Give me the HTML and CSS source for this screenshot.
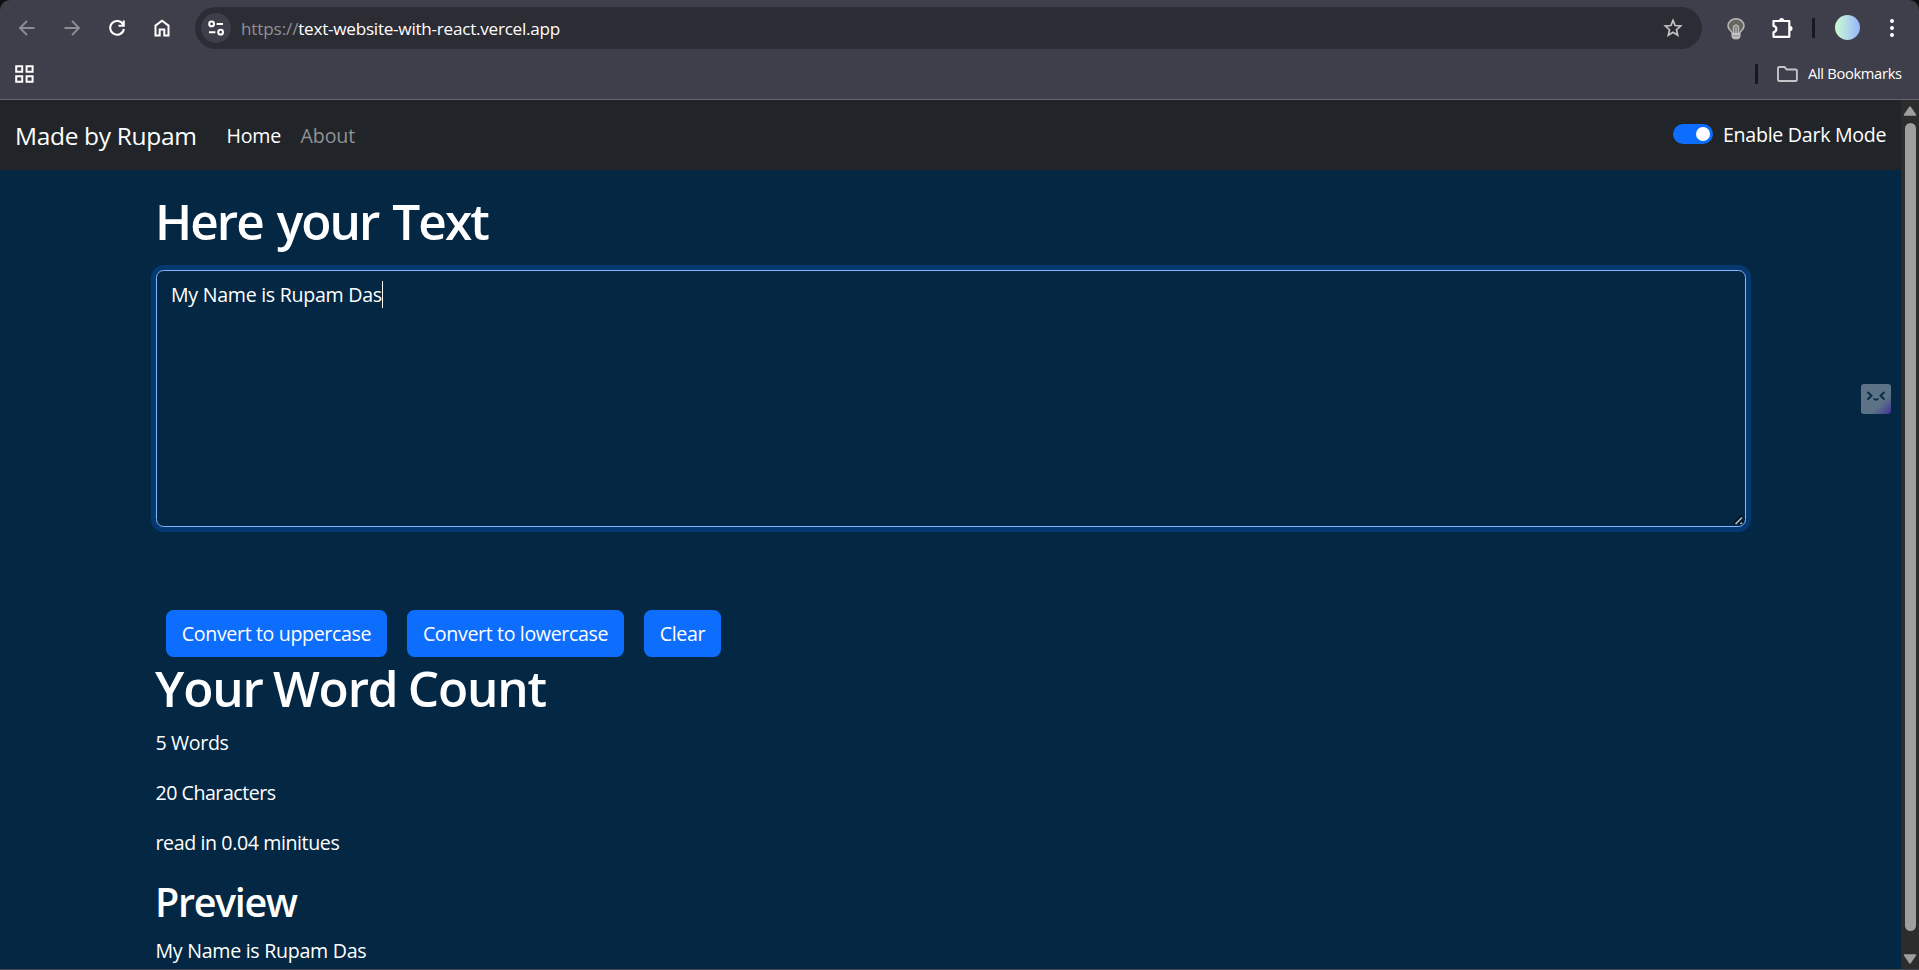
FILE: index.html
```html
<!DOCTYPE html>
<html lang="en">
<head>
<meta charset="utf-8">
<title>Text Utils</title>
<link rel="stylesheet" href="styles.css">
</head>
<body>
<div class="browser">
  <header class="chrome">
    <div class="toolbar">
      <div class="nav-icons">
        <svg class="icon dim" viewBox="0 0 18 18"><path d="M16.500 9H2.500M9 2L2 9l7 7"/></svg>
        <svg class="icon dim" viewBox="0 0 18 18"><path d="M1.500 9h14M9 2l7 7-7 7"/></svg>
        <svg class="icon" viewBox="0 0 18 18"><path d="M15.200 5.600A6.900 6.900 0 1 0 15.900 10M15.800 1.500v5.300h-5.300"/></svg>
        <svg class="icon" viewBox="0 0 18 18"><path d="M2.500 16.600V6.600L9 1.700l6.500 4.900v10H11.300v-6H6.700v6z"/></svg>
      </div>
      <div class="omnibox">
        <span class="site-info"><svg class="tune" viewBox="0 0 18 18"><circle cx="4.600" cy="4.900" r="2.400"/><path d="M9.600 4.900H16M2 13.200h6.400"/><circle cx="13.600" cy="13.200" r="2.400"/></svg></span>
        <span class="url"><span class="scheme">https://</span><span class="host">text-website-with-react.vercel.app</span></span>
        <svg class="star" viewBox="0 0 20 20"><path d="M10 2.400l2.100 5.100 5.600.5-4.200 3.700 1.200 5.400-4.700-2.900-4.700 2.900 1.200-5.400L2.300 8l5.600-.5z"/></svg>
      </div>
      <div class="actions">
        <svg class="bulb" viewBox="0 0 18 22"><path class="glass" d="M5.300 15.500c0-2.500-4.300-3.500-4.300-7.500a8 7.200 0 0 1 16 0c0 4-4.300 5-4.300 7.500z"/><path d="M6.500 15V10a2.500 2.800 0 0 1 5 0v5M9 9v6"/><path class="base" d="M5 15.500h8v3.500l-1.500 1.800h-5L5 19z"/><path class="slot" d="M5.500 18h7"/></svg>
        <svg class="puzzle" viewBox="0 0 22 22"><path d="M2.500 4h15.800v15.800H2.500v-4.600c3.800-.9 3.800-5.400 0-6.300z"/><path class="knob" d="M8 4a2.600 3 0 0 1 5.200 0zM18.500 8.800a3 2.700 0 0 1 0 5.400z"/></svg>
        <span class="divider"></span>
        <span class="avatar"></span>
        <span class="dots"><i></i><i></i><i></i></span>
      </div>
    </div>
    <div class="bookmarks">
      <svg class="apps" viewBox="0 0 19 18"><path d="M1.200 1.200h6v5.600h-6zM11.600 1.200h6v5.600h-6zM1.200 11.200h6v5.600h-6zM11.600 11.200h6v5.600h-6z"/></svg>
      <div class="all">
        <span class="divider"></span>
        <svg class="folder" viewBox="0 0 21 16"><path d="M1 13.800V2.200A1.200 1.200 0 0 1 2.200 1h5.300l2.300 2.500h8.900a1.200 1.200 0 0 1 1.200 1.200v9.100a1.200 1.200 0 0 1-1.200 1.200H2.200A1.200 1.200 0 0 1 1 13.800z"/></svg>
        <span class="all-label">All Bookmarks</span>
      </div>
    </div>
  </header>

  <div class="viewport">
    <div class="page">
      <nav class="navbar">
        <span class="brand">Made by Rupam</span>
        <a class="nav-link active">Home</a>
        <a class="nav-link about">About</a>
        <span class="switch"></span>
        <label class="switch-label">Enable Dark Mode</label>
      </nav>
      <main class="container">
        <h1 class="title">Here your Text</h1>
        <div class="editor"><span class="editor-text">My Name is Rupam Das</span><span class="caret"></span>
          <svg class="grip" viewBox="0 0 10 10"><path class="shade" d="M0 9L8 1M5 9.500L9 5.500"/><path d="M1.500 9L8 2.500M6.500 9L8 7.500"/></svg>
        </div>
        <div class="buttons">
          <button class="btn upper">Convert to uppercase</button>
          <button class="btn lower">Convert to lowercase</button>
          <button class="btn clear">Clear</button>
        </div>
        <h1 class="count-title">Your Word Count</h1>
        <p class="words">5 Words</p>
        <p class="chars">20 Characters</p>
        <p class="time">read in 0.04 minitues</p>
        <h2 class="preview-title">Preview</h2>
        <p class="preview">My Name is Rupam Das</p>
      </main>
    </div>
    <div class="scrollbar">
      <svg class="arrow" viewBox="0 0 14 10"><path d="M7 1l5.500 8h-11z"/></svg>
      <div class="thumb"></div>
      <svg class="arrow" viewBox="0 0 14 10"><path d="M7 9l5.500-8h-11z"/></svg>
    </div>
    <div class="face"><svg viewBox="0 0 30 30"><path d="M7 8.500l3.500 3.200L7 15M23 8.500l-3.500 3.200L23 15M13.200 15c.8 1 2.800 1 3.600 0"/></svg></div>
  </div>
</div>
</body>
</html>
```
FILE: styles.css
```css
* { box-sizing: border-box; }
body { margin: 0; background: #101014; font-family: "Open Sans", "Noto Sans", sans-serif; font-size: 19.6px; line-height: 30px; color: #fff; overflow: hidden; }
svg { display: block; flex: none; fill: none; stroke: #fff; stroke-width: 2; }
h1, h2, p { margin: 0; white-space: nowrap; }

.browser { height: 970px; display: flex; flex-direction: column; border-bottom: 1px solid #45464d; }
.chrome { height: 100px; flex: none; background: #3e3f4b; border-bottom: 1px solid #676874; border-radius: 10px 10px 0 0; }
.toolbar { display: flex; height: 56px; padding: 7px 0 0 18px; }
.nav-icons { display: flex; gap: 27px; padding-top: 11.500px; width: 177px; }
.icon { width: 18px; height: 18px; stroke-width: 2; }
.dim { stroke: #8d8d95; stroke-width: 1.900; }

.omnibox { display: flex; align-items: center; width: 1507px; height: 42px; padding: 0 19px 0 6px; border-radius: 21px; background: #2c2c35; }
.site-info { display: flex; align-items: center; justify-content: center; width: 30px; height: 30px; border-radius: 50%; background: #3e3f4b; }
.tune { width: 18px; height: 18px; }
.url { flex: 1; padding: 2px 0 0 10px; font-size: 17.150px; white-space: nowrap; }
.scheme { color: #919197; letter-spacing: -0.150px; }
.host { letter-spacing: -0.260px; }
.star { width: 20px; height: 20px; stroke: #c5c5c8; stroke-width: 1.700; }

.actions { display: flex; align-items: flex-start; padding-left: 24.500px; }
.bulb { width: 18px; height: 22px; margin-top: 10.500px; stroke: #b9b9b9; stroke-width: 1.500; }
.glass { fill: #66665f; }
.base { fill: #c4c4c4; stroke: #c4c4c4; stroke-width: 1; }
.slot { stroke: #85858a; stroke-width: 1; }
.puzzle { width: 22px; height: 22px; margin: 10px 0 0 26px; stroke-width: 2.200; stroke-linejoin: round; }
.knob { fill: #fff; stroke: none; }
.divider { width: 3px; height: 20px; border-radius: 1px; background: #17171e; }
.actions .divider { margin: 11px 0 0 19.500px; }
.avatar { width: 25px; height: 25px; margin: 8px 0 0 20px; border-radius: 50%; background: linear-gradient(90deg, #c9fbd0, #b4d9e8 50%, #90b6fb); }
.dots { display: flex; flex-direction: column; gap: 3px; margin: 12px 0 0 30px; }
.dots i { width: 4px; height: 4px; border-radius: 50%; background: #fff; }

.bookmarks { display: flex; align-items: center; justify-content: space-between; height: 36px; padding: 0 17px 0 15px; }
.apps { width: 19px; height: 18px; }
.all { display: flex; align-items: center; }
.folder { width: 21px; height: 16px; margin: 0 10px 0 19px; stroke: #c4c4c7; stroke-width: 1.900; }
.all-label { width: 94px; margin-top: -2px; font-size: 14.700px; line-height: 20px; letter-spacing: -0.320px; white-space: nowrap; }

.viewport { position: relative; display: flex; flex: 1; min-height: 0; overflow: hidden; }
.page { width: 1901px; background: #042743; }
.navbar { display: flex; align-items: center; height: 70px; padding: 2px 14px 0 15px; background: #212529; white-space: nowrap; }
.brand { width: 211.500px; font-size: 24.500px; letter-spacing: -0.330px; }
.nav-link { width: 74px; letter-spacing: -0.200px; }
.about { color: #909294; letter-spacing: -0.100px; }
.switch { display: flex; width: 40px; height: 20px; margin: -5px 10px 0 auto; padding: 3px; justify-content: flex-end; border-radius: 10px; background: #0d6efd; }
.switch::after { content: ""; width: 14px; height: 14px; border-radius: 50%; background: #fff; }
.switch-label { width: 164px; margin-top: -2px; letter-spacing: -0.280px; }

.container { padding: 21px 155px 0 156px; }
.title, .count-title { margin-left: -1px; font-size: 49.500px; font-weight: 600; line-height: 60px; }
.title { letter-spacing: -1.950px; word-spacing: 3px; }
.editor { position: relative; display: flex; width: 1590px; height: 257px; margin-top: 19px; padding: 8.500px 14px; border: 1px solid #86b7fe; border-radius: 7.500px; box-shadow: 0 0 0 5px #063972; }
.editor-text { letter-spacing: -0.280px; white-space: nowrap; }
.caret { width: 1px; height: 27px; margin-top: 1px; background: #fff; }
.grip { position: absolute; right: 1px; bottom: 1px; width: 10px; height: 10px; stroke: #b5bcc2; stroke-width: 1.600; }
.shade { stroke: #02121f; stroke-width: 3; }

.buttons { display: flex; gap: 20px; padding: 83px 0 0 10px; }
.btn { height: 47px; padding: 0; border: 0; border-radius: 7.500px; background: #0d6efd; color: #fff; font: inherit; letter-spacing: -0.360px; white-space: nowrap; }
.upper { width: 221px; }
.lower { width: 217px; }
.clear { width: 77px; }
.count-title { margin-top: 1px; letter-spacing: -1.150px; word-spacing: -1.500px; }
.words, .chars, .time, .preview { margin-left: -0.500px; }
.words { margin-top: 10px; margin-bottom: 20px; letter-spacing: -0.350px; }
.chars { margin-bottom: 20px; letter-spacing: -0.480px; }
.time { margin-bottom: 20px; letter-spacing: -0.400px; }
.preview-title { margin: 0 0 10px -1px; font-size: 39.500px; font-weight: 600; line-height: 48px; letter-spacing: -1.350px; }
.preview { letter-spacing: -0.280px; }

.scrollbar { display: flex; flex-direction: column; align-items: center; width: 18px; padding: 6px 0 5px; background: #2c2c2c; }
.arrow { width: 14px; height: 10px; fill: #9f9f9f; stroke: #9f9f9f; stroke-width: 1.500; stroke-linejoin: round; }
.thumb { width: 11px; height: 808px; margin: 7px 0 auto; border-radius: 6px; background: #9f9f9f; }
.face { position: absolute; left: 1861px; top: 283.500px; width: 30px; height: 30px; border-radius: 3px; background: linear-gradient(135deg, #5c7387 65%, #50578c 82%, #452994); }
.face path { stroke: #0b2b47; stroke-width: 1.900; stroke-linecap: round; }
```
